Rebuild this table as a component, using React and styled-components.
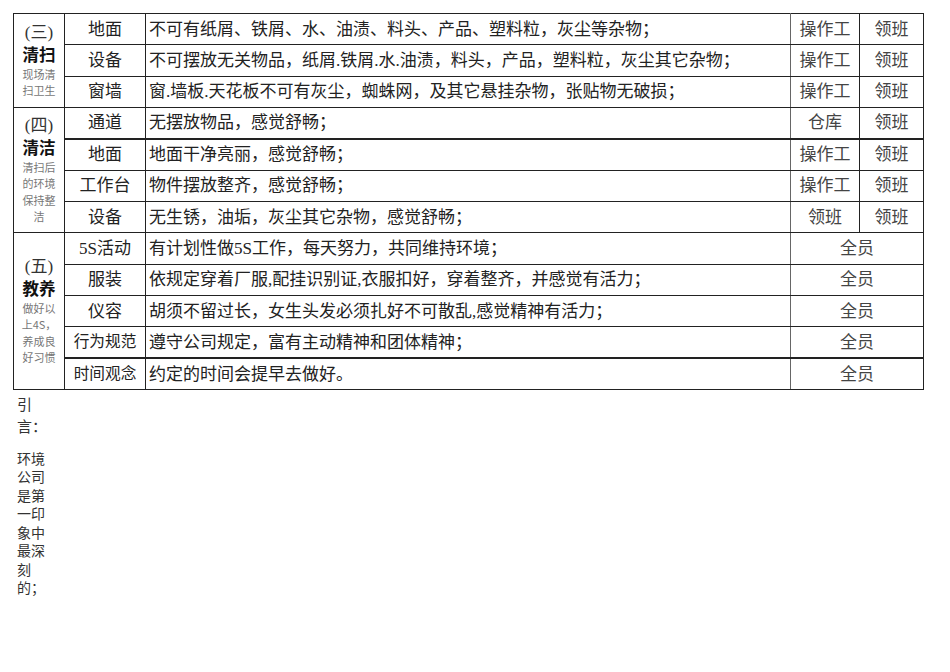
import styled, { createGlobalStyle } from "styled-components";

const GlobalStyle = createGlobalStyle`
  html, body {
    margin: 0;
    padding: 0;
    background: #fff;
  }
  body {
    font-family: "Liberation Serif", "Noto Sans CJK SC", serif;
    color: #222;
  }
`;

const sections = [
  {
    no: "(三)",
    title: "清扫",
    note: ["现场清", "扫卫生"],
    rows: [
      { item: "地面", text: "不可有纸屑、铁屑、水、油渍、料头、产品、塑料粒，灰尘等杂物；", who: ["操作工", "领班"] },
      { item: "设备", text: "不可摆放无关物品，纸屑.铁屑.水.油渍，料头，产品，塑料粒，灰尘其它杂物；", who: ["操作工", "领班"] },
      { item: "窗墙", text: "窗.墙板.天花板不可有灰尘，蜘蛛网，及其它悬挂杂物，张贴物无破损；", who: ["操作工", "领班"] },
    ],
  },
  {
    no: "(四)",
    title: "清洁",
    note: ["清扫后", "的环境", "保持整", "洁"],
    rows: [
      { item: "通道", text: "无摆放物品，感觉舒畅；", who: ["仓库", "领班"] },
      { item: "地面", text: "地面干净亮丽，感觉舒畅；", who: ["操作工", "领班"], thick: true },
      { item: "工作台", text: "物件摆放整齐，感觉舒畅；", who: ["操作工", "领班"] },
      { item: "设备", text: "无生锈，油垢，灰尘其它杂物，感觉舒畅；", who: ["领班", "领班"] },
    ],
  },
  {
    no: "(五)",
    title: "教养",
    note: ["做好以", "上4S，", "养成良", "好习惯"],
    rows: [
      { item: "5S活动", text: "有计划性做5S工作，每天努力，共同维持环境；", who: ["全员"] },
      { item: "服装", text: "依规定穿着厂服,配挂识别证,衣服扣好，穿着整齐，并感觉有活力；", who: ["全员"] },
      { item: "仪容", text: "胡须不留过长，女生头发必须扎好不可散乱,感觉精神有活力；", who: ["全员"] },
      { item: "行为规范", text: "遵守公司规定，富有主动精神和团体精神；", who: ["全员"], small: true },
      { item: "时间观念", text: "约定的时间会提早去做好。", who: ["全员"], thick: true, small: true },
    ],
  },
];

const Page = styled.div`
  padding: 13px 0 0 13px;
`;

const Table = styled.table`
  border-collapse: collapse;
  width: 911px;
  table-layout: fixed;
`;

const Row = styled.tr`
  height: 31.33px;
`;

const Cell = styled.td`
  border: 1px solid #222;
  border-top-width: ${(p) => (p.$thick ? "2px" : "1px")};
  padding: 0 ${(p) => (p.$align === "left" ? "3px" : "0")};
  text-align: ${(p) => p.$align || "center"};
  vertical-align: middle;
  font-size: ${(p) => (p.$small ? "15.7px" : "17px")};
  line-height: 1;
  color: ${(p) => (p.$muted ? "#444" : "#222")};
  white-space: nowrap;
  overflow: hidden;
`;

const TextCell = styled(Cell)`
  border-left-color: #555;
  border-right-color: #666;
`;

const HeadCell = styled.td`
  border: 1px solid #222;
  vertical-align: middle;
  text-align: center;
  padding: 0;
`;

const HeadNo = styled.div`
  font-size: 17px;
  line-height: 19px;
  color: #333;
`;

const HeadTitle = styled.div`
  font-family: "Noto Sans CJK SC", sans-serif;
  font-weight: 700;
  font-size: 16.5px;
  line-height: 24px;
  color: #111;
`;

const HeadNote = styled.div`
  font-family: "Noto Sans CJK SC", sans-serif;
  font-size: 11px;
  line-height: 16.2px;
  color: #777;
  white-space: nowrap;
`;

const Intro = styled.div`
  padding: 3px 0 0 4px;
  color: #333;
  font-family: "Noto Sans CJK SC", sans-serif;
`;

const Para = styled.div`
  font-size: ${(p) => p.$size}px;
  line-height: ${(p) => p.$lh}px;
  margin-bottom: ${(p) => p.$gap || 0}px;
`;

const Line = styled.div`
  white-space: nowrap;
`;

export default function App() {
  return (
    <Page>
      <GlobalStyle />
      <Table>
        <colgroup>
          <col style={{ width: 51 }} />
          <col style={{ width: 81 }} />
          <col style={{ width: 645 }} />
          <col style={{ width: 69 }} />
          <col style={{ width: 64 }} />
        </colgroup>
        <tbody>
          {sections.map((s) =>
            s.rows.map((r, i) => (
              <Row key={s.no + i}>
                {i === 0 && (
                  <HeadCell rowSpan={s.rows.length}>
                    <HeadNo>{s.no}</HeadNo>
                    <HeadTitle>{s.title}</HeadTitle>
                    {s.note.map((n) => (
                      <HeadNote key={n}>{n}</HeadNote>
                    ))}
                  </HeadCell>
                )}
                <Cell $thick={r.thick} $small={r.small}>
                  {r.item}
                </Cell>
                <TextCell $thick={r.thick} $align="left">
                  {r.text}
                </TextCell>
                {r.who.length === 2 ? (
                  <>
                    <Cell $thick={r.thick} $muted>
                      {r.who[0]}
                    </Cell>
                    <Cell $thick={r.thick} $muted>
                      {r.who[1]}
                    </Cell>
                  </>
                ) : (
                  <Cell $thick={r.thick} $muted colSpan={2}>
                    {r.who[0]}
                  </Cell>
                )}
              </Row>
            ))
          )}
        </tbody>
      </Table>
      <Intro>
        <Para $size={15} $lh={22} $gap={12}>
          <Line>引</Line>
          <Line>言：</Line>
        </Para>
        <Para $size={14} $lh={18.5}>
          {["环境", "公司", "是第", "一印", "象中", "最深", "刻", "的；"].map((l) => (
            <Line key={l}>{l}</Line>
          ))}
        </Para>
      </Intro>
    </Page>
  );
}
